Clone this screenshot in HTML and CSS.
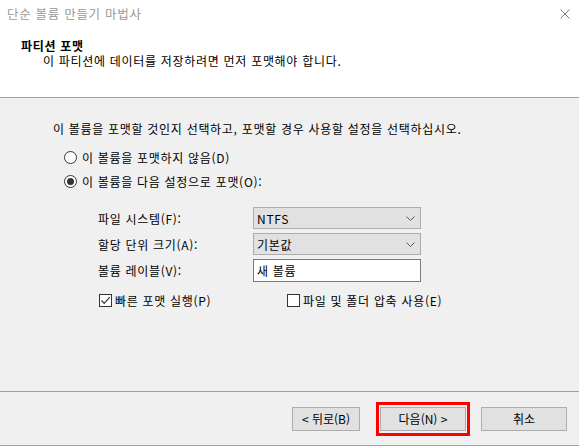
FILE: index.html
```html
<!DOCTYPE html>
<html lang="ko">
<head>
<meta charset="utf-8">
<title>단순 볼륨 만들기 마법사</title>
<link rel="stylesheet" href="styles.css">
</head>
<body>
<div class="window">
  <header class="header">
    <div class="titlebar">
      <span class="title">단순 볼륨 만들기 마법사</span>
      <svg class="close" width="10" height="10" viewBox="0 0 10 10"><path d="M0.5 0.5L9.5 9.5M9.5 0.5L0.5 9.5" stroke="#7a7a7a" stroke-width="1" fill="none"/></svg>
    </div>
    <div class="heading">파티션 포맷</div>
    <div class="subtitle">이 파티션에 데이터를 저장하려면 먼저 포맷해야 합니다.</div>
  </header>
  <main class="body">
    <p class="intro">이 볼륨을 포맷할 것인지 선택하고, 포맷할 경우 사용할 설정을 선택하십시오.</p>
    <div class="radios">
      <label class="radio-row"><span class="radio"></span>이 볼륨을 포맷하지 않음(D)</label>
      <label class="radio-row"><span class="radio checked"></span>이 볼륨을 다음 설정으로 포맷(O):</label>
    </div>
    <div class="form">
      <span class="label">파일 시스템(F):</span>
      <div class="select"><span>NTFS</span><svg width="9" height="5" viewBox="0 0 9 5"><path d="M0.5 0.5L4.5 4.5L8.5 0.5" stroke="#555" fill="none"/></svg></div>
      <span class="label">할당 단위 크기(A):</span>
      <div class="select"><span>기본값</span><svg width="9" height="5" viewBox="0 0 9 5"><path d="M0.5 0.5L4.5 4.5L8.5 0.5" stroke="#555" fill="none"/></svg></div>
      <span class="label">볼륨 레이블(V):</span>
      <div class="textbox">새 볼륨</div>
    </div>
    <div class="checks">
      <label class="check-row quick"><span class="checkbox checked"><svg width="11" height="11" viewBox="0 0 11 11"><path d="M1.5 5.5L4.2 8.3L9.8 2.2" stroke="#333" stroke-width="1.2" fill="none"/></svg></span>빠른 포맷 실행(P)</label>
      <label class="check-row"><span class="checkbox"></span>파일 및 폴더 압축 사용(E)</label>
    </div>
  </main>
  <footer class="footer">
    <button class="btn back">&lt; 뒤로(B)</button>
    <span class="highlight"><button class="btn next">다음(N) &gt;</button></span>
    <button class="btn cancel">취소</button>
  </footer>
</div>
</body>
</html>
```
FILE: styles.css
```css
* { box-sizing: border-box; }
html, body { margin: 0; padding: 0; }
body {
  width: 579px;
  height: 446px;
  overflow: hidden;
  font-family: "Noto Sans CJK KR", "Noto Sans", sans-serif;
  font-size: 12px;
  line-height: 15px;
  letter-spacing: 0.7px;
  color: #000;
  background: #f0f0f0;
}
.window {
  display: flex;
  flex-direction: column;
  height: 446px;
}
.header {
  height: 98px;
  background: #fff;
  border-bottom: 1px solid #a0a0a0;
}
.titlebar {
  height: 26px;
  padding: 0 9px 0 7px;
  display: flex;
  align-items: center;
  justify-content: space-between;
}
.title { color: #999; font-size: 12.5px; }
.close { margin-top: 2px; }
.heading {
  margin: 12px 0 0 21px;
  font-weight: bold;
}
.subtitle { margin-left: 43px; }
.body {
  height: 294px;
  padding: 23px 0 0 53px;
  border-bottom: 1px solid #a0a0a0;
}
.intro { margin: 0; }
.radios {
  margin: 14px 0 0 11px;
  display: flex;
  flex-direction: column;
  gap: 9px;
}
.radio-row, .check-row {
  display: flex;
  align-items: center;
  gap: 5px;
}
.radio {
  width: 13px;
  height: 13px;
  border: 1px solid #333;
  border-radius: 50%;
  background: #fff;
  display: flex;
  align-items: center;
  justify-content: center;
}
.radio.checked::after {
  content: "";
  width: 7px;
  height: 7px;
  border-radius: 50%;
  background: #333;
}
.form {
  margin: 18px 0 0 45px;
  display: grid;
  grid-template-columns: 155px 168px;
  row-gap: 4px;
  align-items: center;
}
.select {
  height: 22px;
  background: #e1e1e1;
  border: 1px solid #adadad;
  padding: 0 5px 0 3px;
  display: flex;
  align-items: center;
  justify-content: space-between;
}
.textbox {
  height: 23px;
  background: #fff;
  border: 1px solid #7a7a7a;
  padding: 0 3px;
  display: flex;
  align-items: center;
}
.checks {
  margin: 11px 0 0 46px;
  display: flex;
}
.quick { width: 188px; }
.checkbox {
  width: 13px;
  height: 13px;
  border: 1px solid #333;
  background: #fff;
  display: flex;
  align-items: center;
  justify-content: center;
  margin-right: -2px;
}
.footer {
  height: 54px;
  border-bottom: 1px solid #a0a0a0;
  display: flex;
  align-items: center;
  padding: 0 0 0 292px;
}
.btn {
  font: inherit;
  color: #000;
  height: 24px;
  background: #e1e1e1;
  border: 1px solid #adadad;
  padding: 0;
  margin: 0;
}
.back { width: 68px; }
.highlight {
  margin-left: 16px;
  border: 3px solid #f00;
  padding: 2px 1px;
  display: flex;
}
.next { width: 86px; }
.cancel { width: 86px; margin-left: 11px; }
```
